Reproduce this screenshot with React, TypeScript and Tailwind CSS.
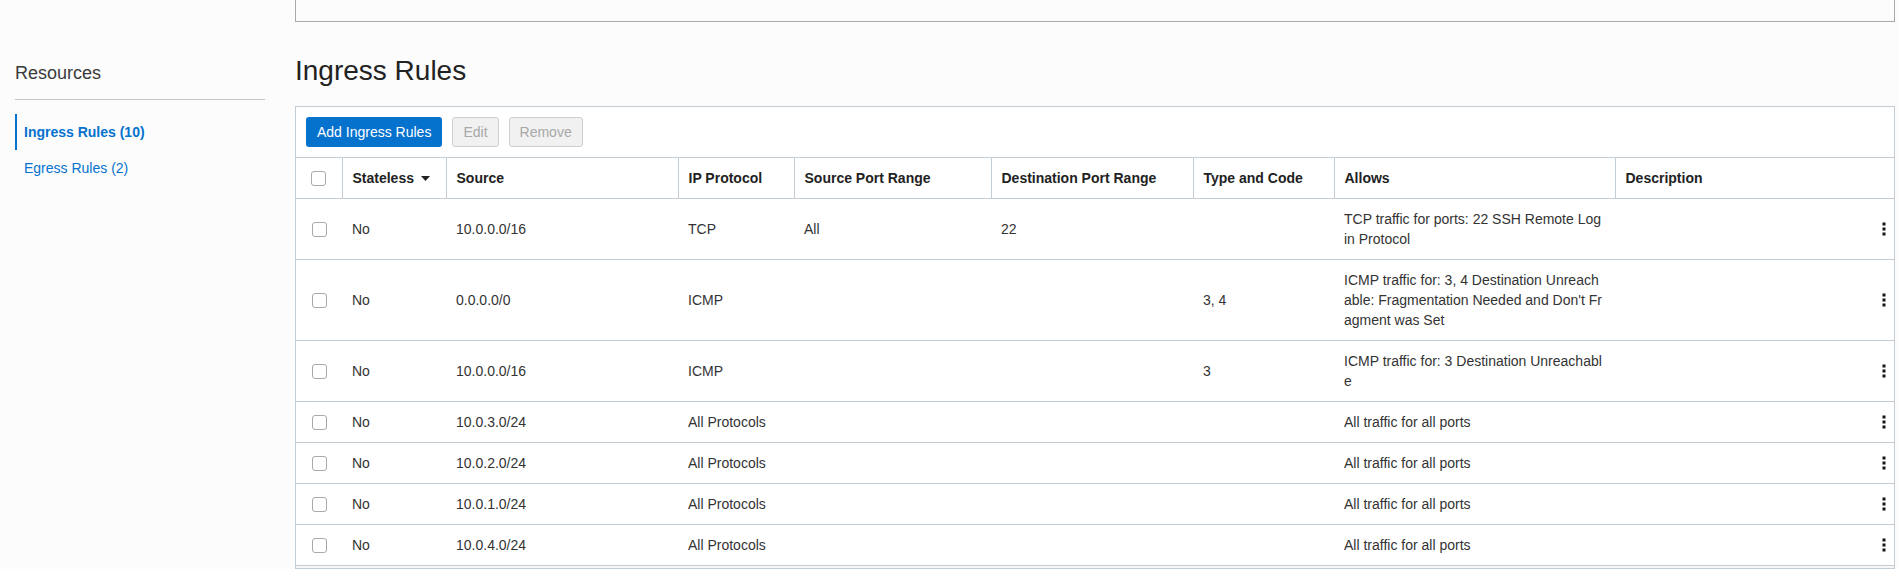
import { type ReactNode } from 'react';

type Rule = {
  source: string;
  protocol: string;
  srcPort?: string;
  dstPort?: string;
  typeCode?: string;
  allows: string[];
};

const rules: Rule[] = [
  { source: '10.0.0.0/16', protocol: 'TCP', srcPort: 'All', dstPort: '22', allows: ['TCP traffic for ports: 22 SSH Remote Log', 'in Protocol'] },
  {
    source: '0.0.0.0/0',
    protocol: 'ICMP',
    typeCode: '3, 4',
    allows: ['ICMP traffic for: 3, 4 Destination Unreach', "able: Fragmentation Needed and Don't Fr", 'agment was Set'],
  },
  { source: '10.0.0.0/16', protocol: 'ICMP', typeCode: '3', allows: ['ICMP traffic for: 3 Destination Unreachabl', 'e'] },
  { source: '10.0.3.0/24', protocol: 'All Protocols', allows: ['All traffic for all ports'] },
  { source: '10.0.2.0/24', protocol: 'All Protocols', allows: ['All traffic for all ports'] },
  { source: '10.0.1.0/24', protocol: 'All Protocols', allows: ['All traffic for all ports'] },
  { source: '10.0.4.0/24', protocol: 'All Protocols', allows: ['All traffic for all ports'] },
];

function Checkbox() {
  return <span className="block mx-auto w-[15px] h-[15px] rounded-[3px] border border-[#a9a9a9] bg-white" />;
}

function Kebab() {
  return (
    <svg width="4" height="14" viewBox="0 0 4 14" className="block">
      <rect x="0.5" y="0.5" width="3" height="3" fill="#161513" />
      <rect x="0.5" y="5.5" width="3" height="3" fill="#161513" />
      <rect x="0.5" y="10.5" width="3" height="3" fill="#161513" />
    </svg>
  );
}

function Th({ children, first }: { children?: ReactNode; first?: boolean }) {
  return (
    <th
      className={`px-[10px] py-[10px] text-left font-bold text-[14px] leading-5 text-[#222] align-middle ${
        first ? '' : 'border-l border-[#c4ccd4]'
      }`}
    >
      {children}
    </th>
  );
}

export default function App() {
  return (
    <div
      className="flex h-[569px] overflow-hidden bg-[#fcfcfc] text-[#333]"
      style={{ fontFamily: '"Liberation Sans", Arial, sans-serif' }}
    >
      {/* Resources sidebar */}
      <aside className="w-[265px] shrink-0 pl-[15px]">
        <div className="pt-[61px] pb-[14px] border-b border-[#c8c8c8]">
          <h2 className="text-[18px] leading-6 text-[#3a3a3a]">Resources</h2>
        </div>
        <nav className="mt-[14px]">
          <a className="flex items-center h-9 border-l-2 border-[#0572ce] pl-[7px] text-[14px] font-bold text-[#0572ce]">
            Ingress Rules (10)
          </a>
          <a className="flex items-center h-9 pl-[9px] text-[14px] text-[#0572ce]">Egress Rules (2)</a>
        </nav>
      </aside>

      <main className="flex-1 ml-[30px] pr-[4px] min-w-0">
        <div className="h-[22px] border-x border-b border-[#a9a9a9]" />

        <h1 className="mt-[32px] text-[28px] leading-[34px] text-[#222]">Ingress Rules</h1>

        <div className="mt-[18px] border border-[#c4ccd4] bg-white">
          <div className="flex gap-[10px] px-[10px] py-[10px]">
            <button className="h-[30px] px-[11px] rounded-[3px] bg-[#0572ce] text-white text-[14px]">
              Add Ingress Rules
            </button>
            <button className="h-[30px] px-[10px] rounded-[3px] border border-[#cfcfcf] bg-[#f1f1f1] text-[#a8a8a8] text-[14px]">
              Edit
            </button>
            <button className="h-[30px] px-[10px] rounded-[3px] border border-[#cfcfcf] bg-[#f1f1f1] text-[#a8a8a8] text-[14px]">
              Remove
            </button>
          </div>

          <table className="w-full table-fixed border-collapse">
            <colgroup>
              <col className="w-[46px]" />
              <col className="w-[104px]" />
              <col className="w-[232px]" />
              <col className="w-[116px]" />
              <col className="w-[197px]" />
              <col className="w-[202px]" />
              <col className="w-[141px]" />
              <col className="w-[281px]" />
              <col />
            </colgroup>
            <thead>
              <tr className="border-y border-[#c4ccd4]">
                <Th first>
                  <Checkbox />
                </Th>
                <Th>
                  <span className="flex items-center gap-[7px]">
                    Stateless
                    <svg width="9" height="5" viewBox="0 0 9 5">
                      <path d="M0 0h9L4.5 5z" fill="#222" />
                    </svg>
                  </span>
                </Th>
                <Th>Source</Th>
                <Th>IP Protocol</Th>
                <Th>Source Port Range</Th>
                <Th>Destination Port Range</Th>
                <Th>Type and Code</Th>
                <Th>Allows</Th>
                <Th>Description</Th>
              </tr>
            </thead>
            <tbody className="text-[14px] leading-5 text-[#333]">
              {rules.map((r, i) => (
                <tr key={i} className="border-b border-[#c4ccd4]">
                  <td className="py-[10px] align-middle">
                    <Checkbox />
                  </td>
                  <td className="px-[10px] py-[10px] align-middle">No</td>
                  <td className="px-[10px] py-[10px] align-middle">{r.source}</td>
                  <td className="px-[10px] py-[10px] align-middle">{r.protocol}</td>
                  <td className="px-[10px] py-[10px] align-middle">{r.srcPort}</td>
                  <td className="px-[10px] py-[10px] align-middle">{r.dstPort}</td>
                  <td className="px-[10px] py-[10px] align-middle">{r.typeCode}</td>
                  <td className="px-[10px] py-[10px] align-middle">
                    {r.allows.map((line, j) => (
                      <span key={j} className="block whitespace-nowrap">
                        {line}
                      </span>
                    ))}
                  </td>
                  <td className="pl-[10px] pr-[8px] py-[10px] align-middle">
                    <div className="flex justify-end">
                      <Kebab />
                    </div>
                  </td>
                </tr>
              ))}
            </tbody>
          </table>
          <div className="h-[2px] bg-[#f7f7f7]" />
        </div>
      </main>
    </div>
  );
}
